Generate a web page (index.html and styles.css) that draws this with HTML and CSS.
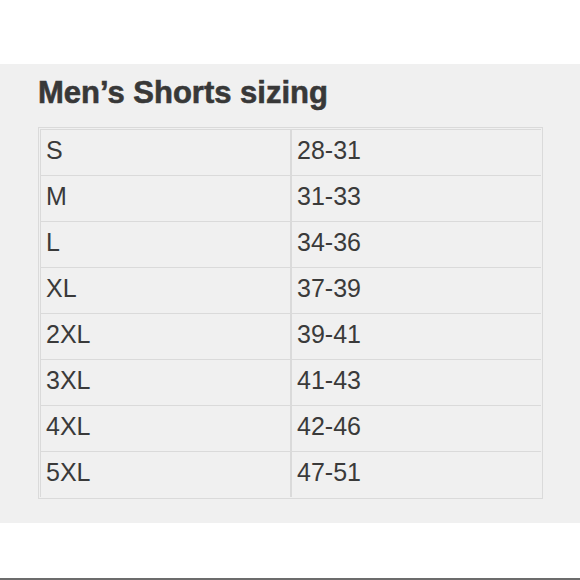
FILE: index.html
```html
<!DOCTYPE html>
<html>
<head>
<meta charset="utf-8">
<link rel="stylesheet" href="styles.css">
</head>
<body>
<div class="page">
  <div class="top"></div>
  <div class="panel">
    <h1 class="title">Men’s Shorts sizing</h1>
    <div class="table">
      <div class="row"><div class="cell">S</div><div class="cell">28-31</div></div>
      <div class="row"><div class="cell">M</div><div class="cell">31-33</div></div>
      <div class="row"><div class="cell">L</div><div class="cell">34-36</div></div>
      <div class="row"><div class="cell">XL</div><div class="cell">37-39</div></div>
      <div class="row"><div class="cell">2XL</div><div class="cell">39-41</div></div>
      <div class="row"><div class="cell">3XL</div><div class="cell">41-43</div></div>
      <div class="row"><div class="cell">4XL</div><div class="cell">42-46</div></div>
      <div class="row"><div class="cell">5XL</div><div class="cell">47-51</div></div>
    </div>
  </div>
  <div class="bottom"></div>
  <div class="edge"></div>
</div>
</body>
</html>
```
FILE: styles.css
```css
html, body {
  margin: 0;
  padding: 0;
  background: #ffffff;
}
.page {
  width: 580px;
  height: 580px;
  display: flex;
  flex-direction: column;
  font-family: "Liberation Sans", Arial, sans-serif;
  color: #3a3a3a;
}
.top {
  height: 64px;
  background: #ffffff;
}
.panel {
  height: 459px;
  background: #f0f0f0;
  padding: 0 37px 0 38px;
  box-sizing: border-box;
}
.title {
  margin: 11px 0 0 0;
  font-size: 31px;
  line-height: 36px;
  font-weight: bold;
  color: #383838;
  -webkit-text-stroke: 0.6px #383838;
}
.table {
  margin-top: 16px;
  border: 1px solid #dadada;
  padding: 1px;
  display: flex;
  flex-direction: column;
}
.row {
  display: grid;
  grid-template-columns: 250px 1fr;
  height: 46px;
  box-sizing: border-box;
  border-top: 1px solid #dadada;
}
.cell {
  font-size: 25px;
  line-height: 26px;
  padding: 7px 0 0 5px;
  border-left: 1px solid #dadada;
}
.cell + .cell {
  border-left: 2px solid #dadada;
}
.bottom {
  flex: 1;
  background: #ffffff;
}
.edge {
  height: 2px;
  background: #6c6c6c;
}
```
